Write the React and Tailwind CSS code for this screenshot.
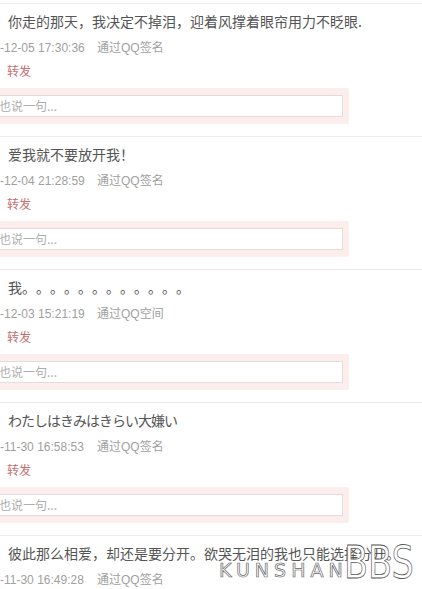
import React from "react";

const entries = [
  {
    text: "你走的那天，我决定不掉泪，迎着风撑着眼帘用力不眨眼.",
    time: "-12-05 17:30:36",
    via: "通过QQ签名",
  },
  { text: "爱我就不要放开我！", time: "-12-04 21:28:59", via: "通过QQ签名" },
  { text: "我", dots: 12, time: "-12-03 15:21:19", via: "通过QQ空间" },
  { text: "わたしはきみはきらい大嫌い", time: "-11-30 16:58:53", via: "通过QQ签名", jp: true },
  {
    text: "彼此那么相爱，却还是要分开。欲哭无泪的我也只能选择分开。",
    time: "-11-30 16:49:28",
    via: "通过QQ签名",
  },
];

const Entry = ({ item }) => (
  <div className="h-[133px] border-t border-[#ececec] flex flex-col">
    <div
      className={
        "mt-[7px] h-[20px] leading-[20px] pl-[8px] text-[14px] text-[#555] whitespace-nowrap flex " +
        (item.jp
          ? "font-['Noto_Sans_CJK_JP',sans-serif] tracking-[-1px]"
          : "font-['Noto_Sans_CJK_SC',sans-serif]")
      }
    >
      <span>{item.text}</span>
      {item.dots &&
        Array.from({ length: item.dots }).map((_, i) => (
          <span key={i} className="w-[14px] inline-block">
            。
          </span>
        ))}
    </div>
    <div className="mt-[9px] h-[16px] leading-[16px] flex text-[12px] text-[#a0a0a0] font-['Liberation_Sans','Noto_Sans_CJK_SC',sans-serif] whitespace-nowrap">
      <span className="w-[97px]">{item.time}</span>
      <span>{item.via}</span>
    </div>
    <div className="mt-[7px] h-[16px] leading-[16px] pl-[7px] text-[12px] text-[#c46f6f] font-['Noto_Sans_CJK_SC',sans-serif]">
      转发
    </div>
    <div className="mt-[9px] w-[349px] h-[36px] bg-[#fdeeee] rounded-tr-[2px] rounded-br-[2px] pt-[7px] pr-[6px] pb-[7px]">
      <div className="h-[22px] bg-white border border-l-0 border-[#e8dada] flex items-center text-[12px] text-[#adadad] font-['Noto_Sans_CJK_SC',sans-serif] -ml-[1px]">
        也说一句...
      </div>
    </div>
  </div>
);

export default function App() {
  return (
    <div className="relative w-[422px] h-[589px] overflow-hidden bg-white pt-[3px]">
      {entries.map((item, i) => (
        <Entry key={i} item={item} />
      ))}
      <span className="absolute left-[219px] top-[561px] text-[19px] leading-[19px] tracking-[5px] text-white font-['DejaVu_Sans',sans-serif] [-webkit-text-stroke:0.7px_#666] pointer-events-none">
        KUNSHAN
      </span>
      <span className="absolute left-[344px] top-[540px] text-[45px] leading-[45px] text-white font-['DejaVu_Sans',sans-serif] [-webkit-text-stroke:0.8px_#555] scale-x-[0.78] origin-left pointer-events-none">
        BBS
      </span>
    </div>
  );
}
